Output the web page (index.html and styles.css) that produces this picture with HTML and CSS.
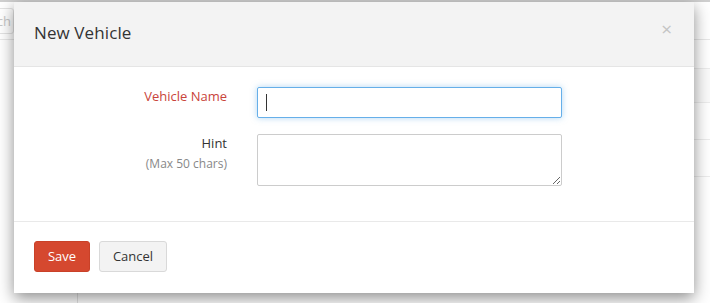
FILE: index.html
```html
<!DOCTYPE html>
<html lang="en">
<head>
  <meta charset="UTF-8" />
  <title>New Vehicle</title>
  <link rel="stylesheet" href="styles.css">
</head>
<body>
  <div class="page">
    <div class="topbar">
      <input class="search" type="text" placeholder="Search" />
    </div>
    <div class="content">
      <div class="sidebar"></div>
      <div class="main">
        <div class="row head"></div>
        <div class="row tall"></div>
        <div class="row shade"></div>
        <div class="row"></div>
      </div>
    </div>
  </div>

  <div class="modal">
    <div class="modal-header">
      <h4 class="modal-title">New Vehicle</h4>
      <span class="close">&times;</span>
    </div>
    <div class="modal-body">
      <div class="form-row">
        <label class="form-label required">Vehicle Name</label>
        <div class="field">
          <input class="form-input focused" type="text" />
          <span class="caret"></span>
        </div>
      </div>
      <div class="form-row">
        <label class="form-label">Hint<small>(Max 50 chars)</small></label>
        <textarea class="form-input area"></textarea>
      </div>
    </div>
    <div class="modal-footer">
      <button class="btn btn-primary">Save</button>
      <button class="btn btn-default">Cancel</button>
    </div>
  </div>
</body>
</html>
```

FILE: styles.css
```css
* { box-sizing: border-box; }
body {
  margin: 0;
  font-family: 'Open Sans', 'Liberation Sans', sans-serif;
  background: #fff; color: #333;
  border-top: 2px solid #cfcfcf;
  height: 303px; overflow: hidden;
}
.topbar { height: 38px; border-bottom: 1px solid #e8e8e8; padding-top: 6px; }
.search {
  margin-left: -60px; width: 74px; height: 26px;
  border: 1px solid #e3e3e3; border-radius: 3px;
  font-family: inherit; font-size: 13px; text-align: right; padding: 0 2px;
}
.search::placeholder { color: #c8c8c8; }
.content { display: flex; height: 263px; }
.sidebar { width: 78px; border-right: 1px solid #e3e3e3; }
.main { flex: 1; }
.row { border-bottom: 1px solid #ececec; height: 37px; }
.row.head { height: 29px; }
.row.tall { height: 34px; background: #fafafa; }
.row.shade { height: 37px; }

.modal {
  position: absolute; left: 14px; top: 2px; width: 680px;
  background: #fff;
  box-shadow: 0 5px 15px rgba(0,0,0,0.45);
}
.modal-header {
  display: flex; align-items: center; justify-content: space-between;
  height: 65px; padding: 0 20px 3px;
  background: #f3f3f3; border-bottom: 1px solid #e5e5e5;
}
.modal-title { margin: 0; font-size: 17px; font-weight: 400; color: #333; letter-spacing: 0.1px; }
.close { font-size: 19px; color: #c4c4c4; line-height: 1; margin-top: -6px; margin-right: 2px; }

.modal-body { padding: 20px; border-bottom: 1px solid #e9e9e9; height: 155px; }
.form-row { display: grid; grid-template-columns: 193px 305px; column-gap: 30px; margin-bottom: 16px; }
.form-label {
  text-align: right; font-size: 13px; color: #333; line-height: 18px;
  display: flex; flex-direction: column; align-items: flex-end;
}
.form-label small { font-size: 12px; color: #888; margin-top: 3px; }
.form-label.required { color: #c9443b; }
.field { position: relative; }
.form-input {
  width: 305px; height: 31px; border: 1px solid #ccc; border-radius: 2px;
  font-family: inherit; font-size: 13px; padding: 4px 8px; margin: 0; display: block;
}
.form-input.focused { border-color: #66afe9; box-shadow: 0 0 6px rgba(102,175,233,0.5); outline: none; }
.form-input.area { height: 52px; resize: vertical; }
.caret {
  position: absolute; left: 9px; top: 7px;
  width: 1px; height: 17px; background: #333;
}

.modal-footer { display: flex; gap: 9px; padding: 19px 20px 21px; }
.btn {
  height: 31px; border-radius: 3px; font-family: inherit; font-size: 13px;
  padding: 0 12px 1px; cursor: pointer;
}
.btn-primary { background: #d5482f; border: 1px solid #c94128; color: #fff; width: 56px; }
.btn-default { background: #f3f3f3; border: 1px solid #d9d9d9; color: #333; width: 68px; }
```
